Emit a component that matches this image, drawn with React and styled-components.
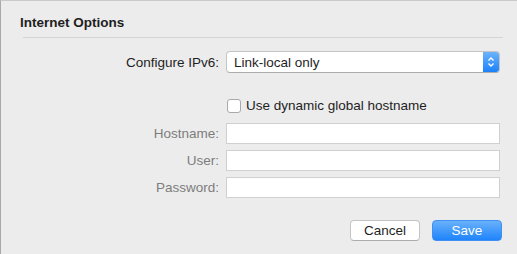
import React from "react";
import styled, { createGlobalStyle } from "styled-components";

const Global = createGlobalStyle`
  html, body { margin: 0; padding: 0; background: #ececec; }
  body { font-family: "Liberation Sans", Arial, sans-serif; font-size: 13.5px; color: #1a1a1a; }
`;

const Window = styled.div`
  width: 517px;
  height: 254px;
  box-sizing: border-box;
  background: #ececec;
  border-top: 1px solid #c9c9c9;
  border-left: 1px solid #a9a9a9;
  padding: 0 14px 0 19px;
  display: flex;
  flex-direction: column;
`;

const Title = styled.div`
  font-weight: bold;
  font-size: 13.5px;
  padding-top: 13px;
  height: 17px;
  line-height: 17px;
  color: #1e1e1e;
`;

const Separator = styled.div`
  height: 1px;
  background: #d5d5d5;
  margin: 6px 0 0 3px;
  width: 480px;
`;

const Form = styled.div`
  display: grid;
  grid-template-columns: 200px 274px;
  column-gap: 6px;
  align-items: center;
  margin-top: 13px;
`;

const Label = styled.div`
  text-align: right;
  padding-right: 1px;
  color: ${(p) => (p.dim ? "#7d7d7d" : "#1e1e1e")};
  font-size: 13.5px;
`;

const SelectBox = styled.div`
  height: 20px;
  border: 1px solid #c4c4c4;
  border-bottom-color: #adadad;
  border-radius: 4px;
  background: #fff;
  display: flex;
  align-items: center;
  overflow: hidden;
  box-sizing: content-box;
`;

const SelectText = styled.div`
  flex: 1;
  padding-left: 7px;
  font-size: 13.5px;
  color: #1e1e1e;
`;

const Stepper = styled.div`
  width: 16px;
  height: 100%;
  background: linear-gradient(#6cb3fa, #1a82fb);
  display: flex;
  align-items: center;
  justify-content: center;
`;

const CheckRow = styled.label`
  grid-column: 2;
  display: flex;
  align-items: center;
  gap: 5px;
  margin-top: 25px;
  margin-bottom: 7px;
  font-size: 13.5px;
  color: #1e1e1e;
`;

const CheckBox = styled.span`
  width: 12px;
  height: 12px;
  border: 1px solid #a9a9a9;
  border-radius: 3px;
  background: #fff;
  margin-left: 1px;
`;

const Field = styled.div`
  height: 19px;
  border: 1px solid #d0d0d0;
  background: #fff;
  margin: 3px 0;
`;

const Buttons = styled.div`
  display: flex;
  justify-content: flex-end;
  gap: 12px;
  margin-top: 19px;
  padding-right: 1px;
`;

const Button = styled.div`
  width: ${(p) => p.w}px;
  height: 19px;
  border-radius: 4px;
  display: flex;
  align-items: center;
  justify-content: center;
  font-size: 13.5px;
  box-sizing: content-box;
  ${(p) =>
    p.primary
      ? `background: linear-gradient(#69b1fa, #1e84fb); color: #fff; border: 1px solid #3f8ff5;`
      : `background: #fff; color: #1e1e1e; border: 1px solid #c4c4c4; border-bottom-color: #adadad;`}
`;

export default function App() {
  return (
    <>
      <Global />
      <Window>
        <Title>Internet Options</Title>
        <Separator />
        <Form>
          <Label>Configure IPv6:</Label>
          <SelectBox>
            <SelectText>Link-local only</SelectText>
            <Stepper>
              <svg width="8" height="12" viewBox="0 0 8 12">
                <path d="M1.5 4.5 L4 2 L6.5 4.5 M1.5 7.5 L4 10 L6.5 7.5" fill="none" stroke="#fff" strokeWidth="1.3" />
              </svg>
            </Stepper>
          </SelectBox>
          <CheckRow>
            <CheckBox />
            Use dynamic global hostname
          </CheckRow>
          <Label dim>Hostname:</Label>
          <Field />
          <Label dim>User:</Label>
          <Field />
          <Label dim>Password:</Label>
          <Field />
        </Form>
        <Buttons>
          <Button w={68}>Cancel</Button>
          <Button w={68} primary>Save</Button>
        </Buttons>
      </Window>
    </>
  );
}
